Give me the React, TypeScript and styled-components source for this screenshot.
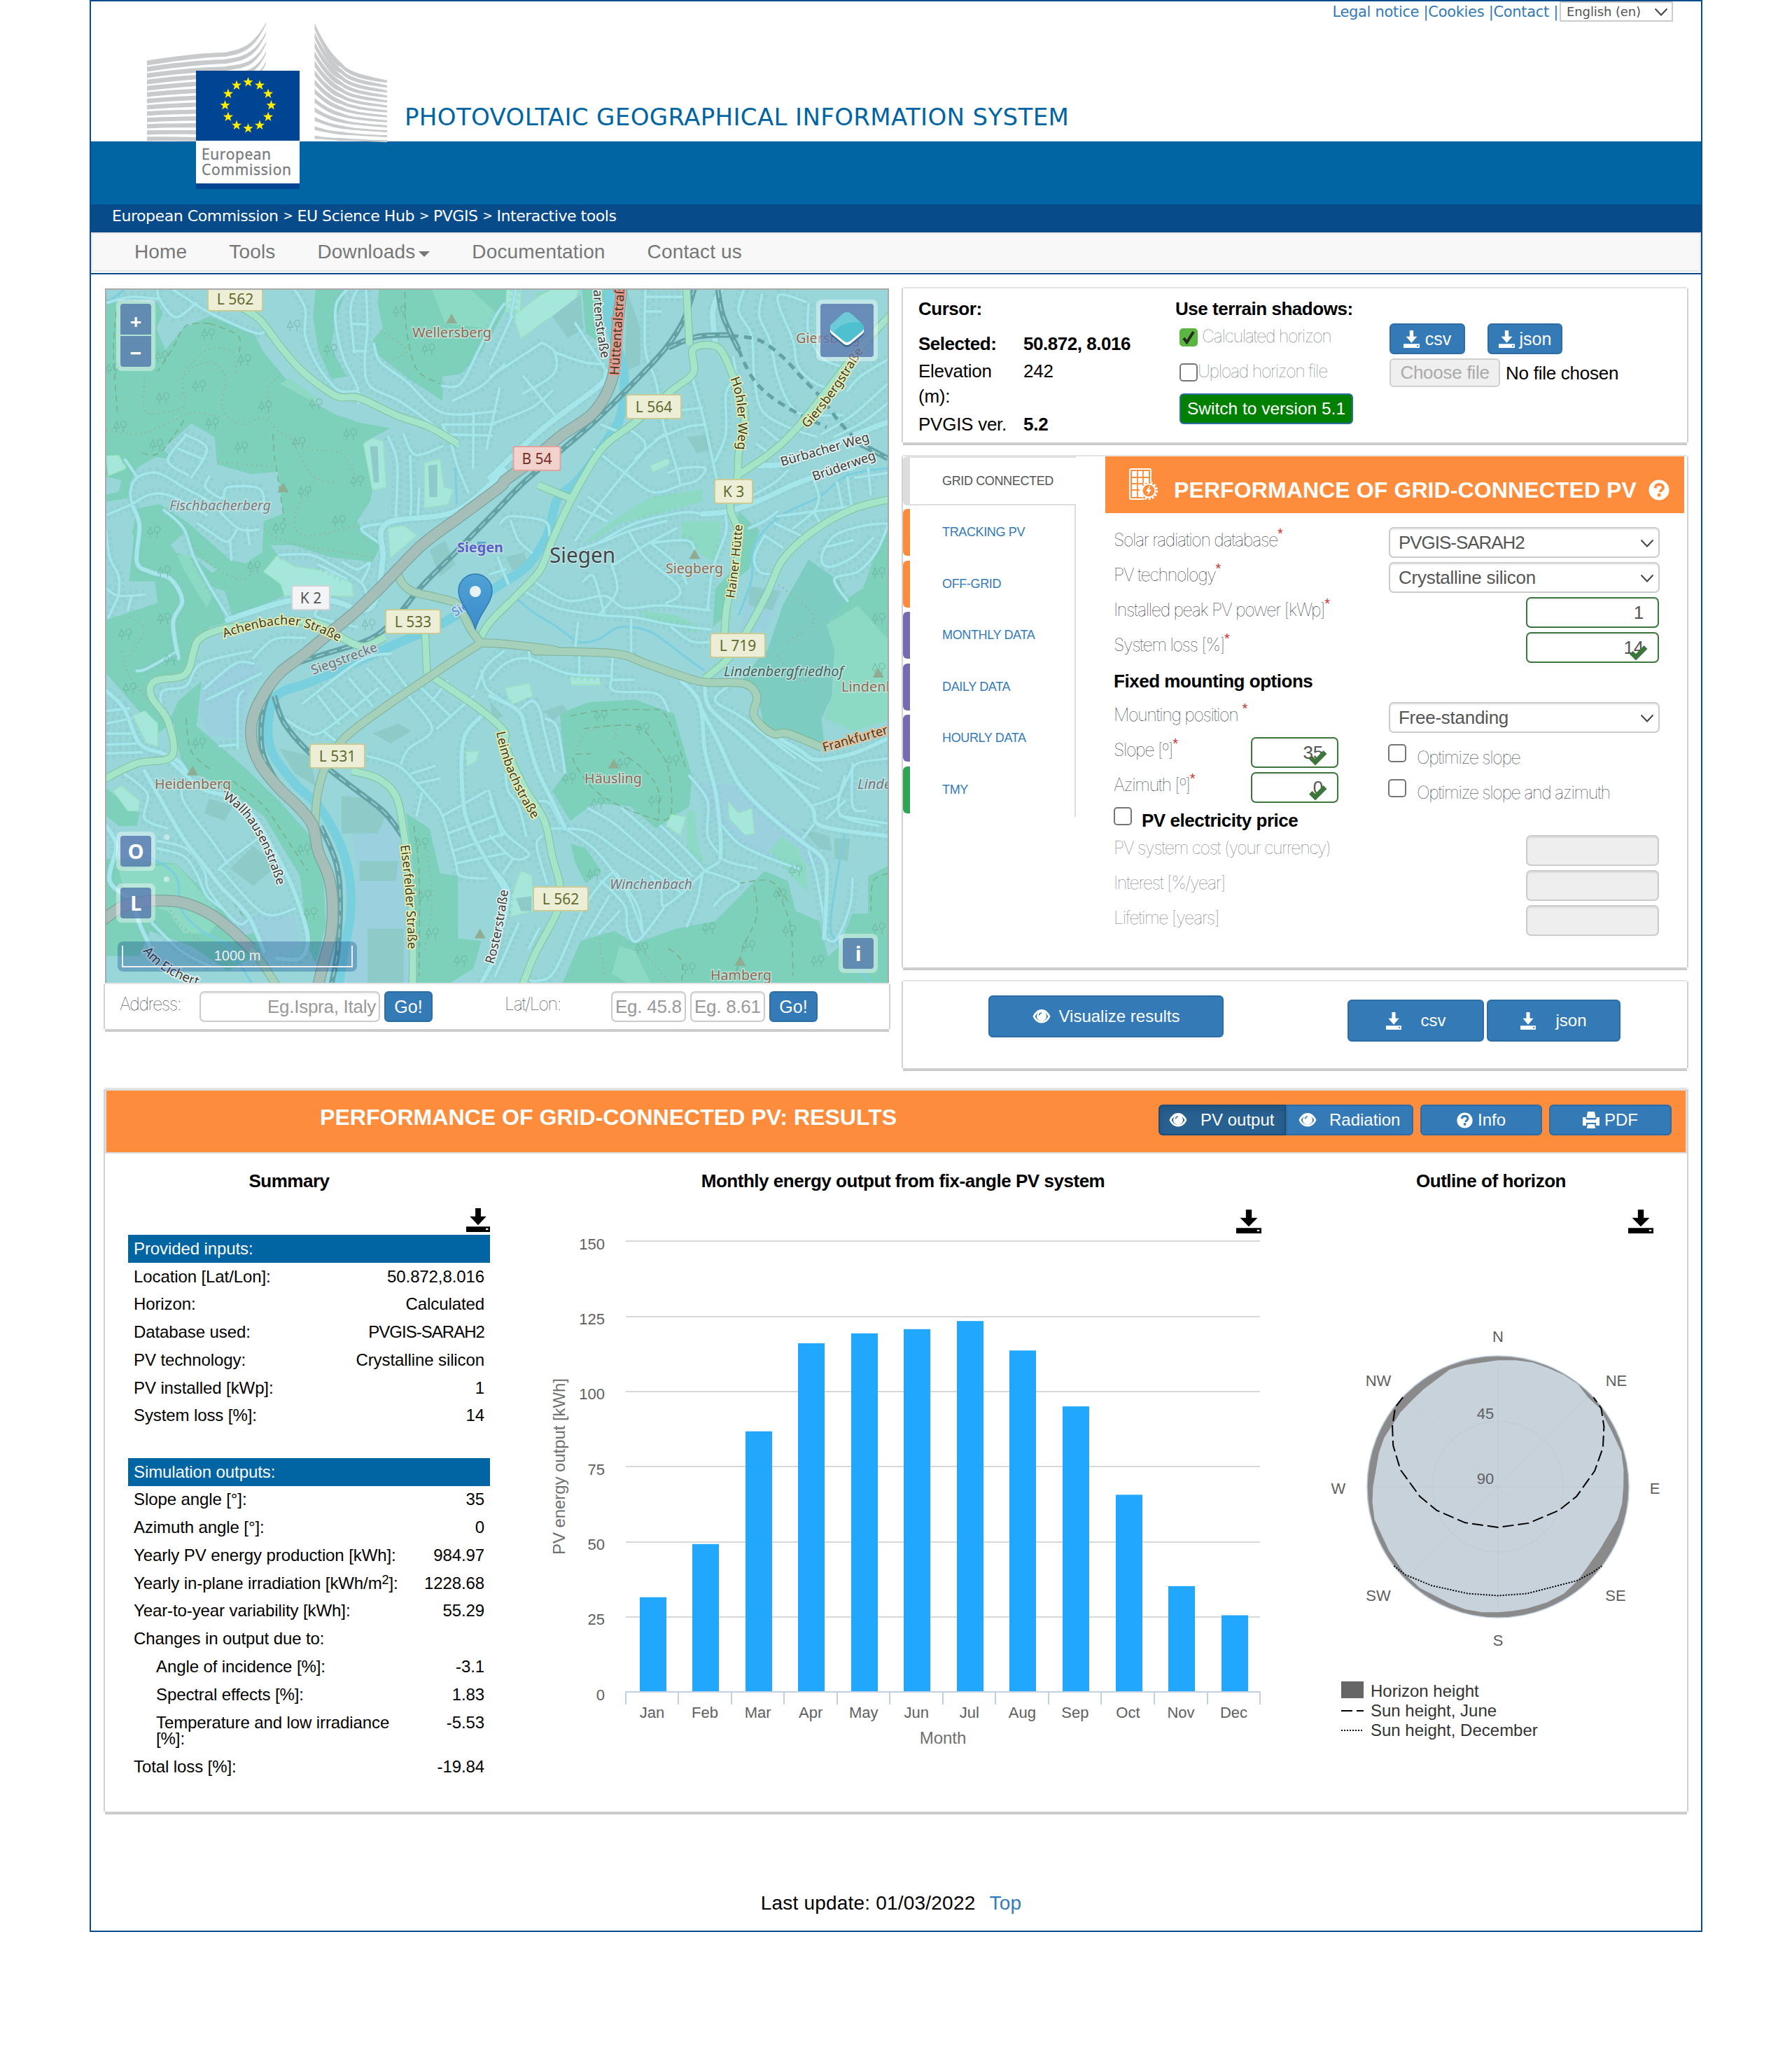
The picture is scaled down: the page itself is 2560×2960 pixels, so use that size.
import React from "react";
import styled, { createGlobalStyle, css } from "styled-components";

const SANS = `"Liberation Sans", Arial, sans-serif`;
const VERDANA = `"DejaVu Sans", Verdana, sans-serif`;
const MAPFONT = `"Noto Sans", "Open Sans", sans-serif`;

const GlobalStyle = createGlobalStyle`
  * { box-sizing: border-box; }
  body { margin: 0; background: #fff; font-family: ${SANS}; color: #000; }
`;

/* ---------- page frame ---------- */

const Page = styled.div`
  width: 2304px;
  height: 2760px;
  margin: 0 auto;
  border: 2px solid #074b8a;
  background: #fff;
  font-size: 26px;
  letter-spacing: -0.01em;
`;

const Header = styled.header`
  position: relative;
  height: 200px;
  display: flex;
  flex-direction: column;
  justify-content: space-between;
`;

const TopLinks = styled.div`
  display: flex;
  justify-content: flex-end;
  padding-right: 40px;
  font-family: ${VERDANA};
  font-size: 21px;
  line-height: 30px;
  letter-spacing: -0.32px;
  color: #337ab7;
  white-space: pre;
`;

const LangSelect = styled.div`
  display: flex;
  align-items: center;
  justify-content: space-between;
  width: 162px;
  height: 29px;
  margin-left: 2px;
  padding: 0 5px 0 8px;
  border: 2px solid #ccc;
  color: #555;
  font-size: 18px;
  letter-spacing: -0.1px;
`;

const SiteTitle = styled.h1`
  margin: 0;
  padding: 0 0 12px 448px;
  font: 400 34px/46px ${VERDANA};
  letter-spacing: 0.36px;
  color: #0065a2;
  white-space: nowrap;
`;

const Logo = styled.svg`
  position: absolute;
  left: 80px;
  top: 28px;
  z-index: 1;
`;

const BlueBand = styled.div`
  height: 90px;
  background: #0065a2;
`;

const Crumbs = styled.div`
  display: flex;
  gap: 7px;
  height: 40px;
  padding: 0 30px;
  background: #074b8a;
  color: #fff;
  font: 400 22px/33px ${VERDANA};
  letter-spacing: -0.45px;
  white-space: nowrap;
`;

const CrumbSep = styled.span`
  width: 13px;
  font-size: 17px;
`;

const Nav = styled.nav`
  display: flex;
  height: 56px;
  padding: 0 30px;
  border: 2px solid #e7e7e7;
  background: #f8f8f8;
  color: #777;
  font-size: 28px;
  line-height: 58px;
  letter-spacing: 0.15px;
`;

const NavItem = styled.span`
  display: flex;
  align-items: center;
  gap: 5px;
  padding: 0 30px;
`;

const Caret = styled.i`
  border: 8px solid transparent;
  border-top-color: #777;
  border-bottom: 0;
  margin-top: 5px;
`;

const NavLine = styled.div`
  height: 2px;
  margin-top: 2px;
  background: #074b8a;
`;

const Content = styled.main`
  padding: 20px 20px 0;
`;

const Columns = styled.div`
  display: flex;
  gap: 20px;
`;

const Column = styled.div<{ $gap?: number }>`
  display: flex;
  flex-direction: column;
  gap: ${(p) => p.$gap ?? 0}px;
  width: 1120px;
`;

const panelEdge = css`
  background: #fff;
  box-shadow: -2px 0 0 #d2d2d2, 2px 0 0 #d2d2d2, 0 -2px 0 #e4e4e4, 0 2px 0 #d0d0d0, 0 4px 0 #c8c8c8;
`;

/* ---------- controls ---------- */

const Thin = styled.span<{ $faded?: boolean }>`
  font-family: Inter, ${SANS};
  font-weight: 100;
  font-size: 25px;
  letter-spacing: -0.055em;
  color: ${(p) => (p.$faded ? "#6f747a" : "#1c2733")};
  white-space: nowrap;
`;

const Button = styled.button<{ $w: number; $h?: number; $size?: number; $gap?: number; $tone?: "green" }>`
  display: flex;
  align-items: center;
  justify-content: center;
  gap: ${(p) => p.$gap ?? 8}px;
  width: ${(p) => p.$w}px;
  height: ${(p) => p.$h ?? 44}px;
  padding: 0;
  border: 2px solid #2e6da4;
  border-radius: 6px;
  background: ${(p) => (p.$tone === "green" ? "#008000" : "#337ab7")};
  color: #fff;
  font: 400 ${(p) => p.$size ?? 26}px ${SANS};
  letter-spacing: 0;
  white-space: nowrap;
`;

const Field = styled.div<{ $w: number; $kind?: "valid" | "off"; $align?: "right"; $pad?: number }>`
  position: relative;
  display: flex;
  flex: none;
  align-items: center;
  justify-content: ${(p) => (p.$align ? "flex-end" : "space-between")};
  width: ${(p) => p.$w}px;
  height: 44px;
  padding: 1px ${(p) => p.$pad ?? 6}px 0;
  border: 2px solid ${(p) => (p.$kind === "valid" ? "#3c763d" : "#ccc")};
  border-radius: 7px;
  background: ${(p) => (p.$kind === "off" ? "#eee" : "#fff")};
  box-shadow: inset 0 2px 2px rgba(0, 0, 0, 0.075);
  color: ${(p) => (p.$kind === "valid" ? "#555" : "#999")};
  white-space: nowrap;
`;

const Placeholder = styled.span`
  overflow: hidden;
  width: 94px;
`;

const SelectBox = styled(Field)`
  padding: 1px 6px 0 12px;
  color: #555;
`;

const Caps = styled.span`
  letter-spacing: -0.04em;
`;

const Check = styled.span<{ $on?: boolean }>`
  display: flex;
  flex: none;
  align-items: center;
  justify-content: center;
  width: 26px;
  height: 26px;
  border-radius: 5px;
  border: 2px solid ${(p) => (p.$on ? "#5bb543" : "#767676")};
  background: ${(p) => (p.$on ? "#5bb543" : "#fff")};
`;

const ValidMark = styled.svg`
  position: absolute;
  right: 14px;
  bottom: 1px;
`;

const Chevron = () => (
  <svg width="20" height="12" viewBox="0 0 20 12" fill="none" stroke="#444" strokeWidth="2">
    <path d="M1.5 1.5 10 10.5 18.5 1.5" />
  </svg>
);

const Tick = () => (
  <ValidMark width="26" height="22" viewBox="0 0 26 22">
    <path fill="#3c763d" d="M20.5 0 25.5 5 9 21.5 0 12.5 4.6 8 9 12z" />
  </ValidMark>
);

const SaveIcon = ({ s = 25, fill = "#fff", w = 23 }: { s?: number; fill?: string; w?: number }) => (
  <svg width={w} height={s} viewBox="0 0 26 26" preserveAspectRatio="none" fill={fill}>
    <path d="M10 0h6v9h6l-9 9.500L4 9h6z" />
    <path fillRule="evenodd" d="M0 20h26v6H0zM21.500 22h2.500v1.800h-2.500z" />
  </svg>
);

const EyeIcon = () => (
  <svg width="26" height="22" viewBox="0 0 26 22">
    <path fill="#fff" fillRule="evenodd" d="M13 1C7 1 2.500 6 .5 11c2 5 6.500 9.500 12.500 9.500s10.500-4.500 12.500-9.500C23.500 6 19 1 13 1zM13 18c-4 0-7.500-3-9.300-7 1-2 2.600-4 4.300-5a7 7 0 1 0 10 0c1.700 1 3.300 3 4.300 5-1.800 4-5.300 7-9.300 7z" />
    <path d="M9.500 9.500c.2-2 1.500-3.300 3.500-3.500" stroke="#337ab7" strokeWidth="1.600" fill="none" />
  </svg>
);

const HelpIcon = ({ s, bg }: { s: number; bg: string }) => (
  <svg width={s} height={s} viewBox="0 0 30 30">
    <circle cx="15" cy="15" r="14.500" fill="#fff" />
    <path d="M9.700 12.200c0-3 2-5.200 5.500-5.200s5.700 1.900 5.700 4.500c0 3.600-4.100 3.500-4.100 6.600" fill="none" stroke={bg} strokeWidth="4" />
    <rect x="12.900" y="20" width="4.400" height="4.400" fill={bg} />
  </svg>
);

const PrintIcon = () => (
  <svg width="24" height="24" viewBox="0 0 24 24" fill="#fff">
    <path d="M7 0h10l1.500 9h-13z" />
    <path fillRule="evenodd" d="M0 8h4l1 3.500h14L20 8h4v12h-5v-4H5v4H0z" />
    <path d="M7 18h10l1 6H6z" />
  </svg>
);

const SolarIcon = () => (
  <svg width="42" height="47" viewBox="0 0 42 47" fill="none" stroke="#fff">
    <path d="M31 20V3q0-2-2-2H3Q1 1 1 3v39q0 2 2 2h19" strokeWidth="2" />
    <path d="M4 4h24v19l-9 10v8H4z" fill="#fff" stroke="none" />
    <path d="M12 3v39M20 3v30M3 13h26M3 22h26M3 31h18" stroke="#fd8d3c" strokeWidth="1.800" />
    <circle cx="28" cy="32" r="11.500" strokeWidth="3.500" strokeDasharray="2.500 2.660" />
    <circle cx="28" cy="32" r="9.500" fill="#fd8d3c" strokeWidth="2" />
    <path d="M29.500 25 24 33h3.300l-1.500 6 6-8.500h-3.300l2-5.500z" fill="#fff" stroke="none" />
  </svg>
);

/* ---------- map geometry ---------- */

/* The map data is digitised on four sheets; each vertex carries the sheet letter. */
const SHEETS: Record<string, [number, number, number, number]> = {
  A: [140, 400, 0.37, 0.3444],
  B: [700, 400, 0.37, 0.3444],
  C: [140, 930, 0.37, 0.3571],
  D: [700, 930, 0.37, 0.3571],
};

const parse = (s: string): [number, number][] =>
  s.split(" ").map((t) => {
    const [ox, oy, sx, sy] = SHEETS[t[0]];
    const [x, y] = t.slice(1).split(",").map(Number);
    return [ox + x * sx, oy + y * sy];
  });

const smooth = (s: string) => {
  const p = parse(s);
  let d = `M${p[0][0].toFixed(1)} ${p[0][1].toFixed(1)}`;
  for (let i = 0; i < p.length - 1; i++) {
    const a = p[i - 1] ?? p[i];
    const b = p[i];
    const c = p[i + 1];
    const e = p[i + 2] ?? c;
    const n = [b[0] + (c[0] - a[0]) / 6, b[1] + (c[1] - a[1]) / 6, c[0] - (e[0] - b[0]) / 6, c[1] - (e[1] - b[1]) / 6, c[0], c[1]];
    d += "C" + n.map((v) => v.toFixed(1)).join(" ");
  }
  return d;
};

const poly = (s: string) => parse(s).map((p) => p.map((v) => v.toFixed(1)).join(",")).join(" ");

const FOREST = [
  "A32,80 A130,85 A230,95 A250,140 A225,200 A260,290 A330,200 A430,150 A600,220 A640,300 A740,430 A850,510 A1000,590 A1130,615 A1030,670 A1060,870 A1050,920 A1000,1000 A1030,1050 A1100,1080 A1060,1170 A900,1150 A750,1100 A665,1100 A700,1150 A640,1210 A710,1260 A720,1310 A520,1400 A490,1290 A430,1270 A500,1420 A430,1440 A350,1568 A32,1568 A32,1410 A230,1340 A220,1250 A120,1250 A140,1060 A100,1040 A140,960 A32,990 A32,890 A80,880 A90,830 A32,815",
  "A840,41 A960,41 A920,150 A900,280 A960,400 A900,410 A850,290 A830,150",
  "A1085,41 A1568,41 A1540,150 A1480,300 A1400,390 A1330,400 A1330,500 A1200,410 A1080,310 A1060,250 A1100,200 A1080,100",
  "B0,41 B90,41 B60,120 B0,240",
  "B355,41 B450,41 B450,180 B420,260 B370,220",
  "B900,140 B960,290 B930,250 B895,170",
  "B960,960 B1040,1040 B1000,1200 B940,1250 B900,1400 B860,1440 B870,1280 B940,1200",
  "B1536,1030 B1500,1100 B1440,1280 B1380,1320 B1300,1440 B1340,1568 B1536,1568",
  "D270,250 D380,205 D560,195 D710,250 D780,500 D770,620 D640,710 D540,620 D400,610 D310,680 D240,560 D290,490",
  "D280,1327 D350,1160 D480,1120 D560,1170 D720,1110 D870,1080 D1060,880 D1150,920 D1180,1040 D1270,1080 D1290,1160 D1330,1327",
  "D1460,900 D1536,860 D1536,1327 D1200,1327 D1350,1180 D1400,1050 D1460,1050",
  "D310,770 D370,790 D430,880 D370,930 D330,850",
  "C32,0 C360,0 C340,90 C200,110 C190,160 C270,300 C230,330 C150,230 C32,90",
  "C280,270 C310,200 C400,120 C380,300 C560,460 C700,600 C820,740 C870,900 C880,1100 C840,1250 C810,1180 C780,900 C640,660 C480,540 C330,470",
  "C32,550 C160,650 C150,700 C80,700 C32,660",
  "C32,830 C300,850 C440,990 C560,1140 C620,1120 C640,1200 C500,1280 C360,1180 C200,1120 C160,1220 C32,1220",
  "C1190,650 C1280,710 C1320,890 C1390,900 C1390,1150 C1480,1160 C1450,1270 C1360,1327 C1230,1327 C1220,900",
];

const TOWN_PATCH = [
  "A250,700 A360,595 A450,650 A460,765 A590,805 A695,795 A715,970 A640,1000 A635,1130 A570,1175 A510,1160 A350,1010 A240,930 A135,950 A120,850 A150,780 A220,735 A290,740",
  "A280,1100 A340,1040 A370,1140 A460,1200 A440,1215 A380,1160 A300,1130",
  "A32,920 A140,900 A150,960 A130,1060 A100,1080 A90,1200 A32,1200",
  "A820,500 A860,460 A1030,550 A1020,590 A920,560",
];

const MEADOW = [
  "A1290,41 A1440,41 A1540,140 A1500,200 A1340,180",
  "B360,1090 B500,980 B620,900 B820,870 B820,920 B650,970 B500,1010 B400,1080",
  "B1300,1430 B1420,1350 B1536,1490 B1536,1568 B1340,1568",
  "D1330,0 D1536,0 D1536,280 D1400,320 D1290,270 D1330,150",
  "D500,1180 D560,1200 D620,1327 D530,1327 D470,1290",
  "D760,640 D790,640 D800,760 D830,860 D760,790",
  "C80,880 C300,850 C480,1060 C430,1130 C330,1130 C270,1040 C110,990",
  "B740,1000 B890,1000 B880,1180 B830,1150 B740,1080",
  "A305,1140 A350,1140 A440,1310 A420,1360 A330,1200",
  "A740,410 A860,500 A840,510 A700,430",
  "D1080,800 D1130,740 D1190,790 D1220,860 D1225,960 D1200,940",
  "B580,1370 B720,1390 B830,1450 B780,1460 B600,1400",
  "B180,50 B260,41 B270,80 B190,120",
];

const SCHOOL = [
  "A1025,680 A1060,658 A1100,670 A1112,860 A1060,870",
  "A1262,760 A1320,745 A1335,860 A1370,870 A1350,930 A1260,945",
  "A640,1210 A690,1145 A760,1190 A900,1210 A980,1260 A985,1310 A720,1310 A705,1260",
  "A32,730 A80,728 A110,780 A40,812",
  "B90,150 B200,60 B240,41 B340,41 B330,90 B210,170 B120,240",
  "B65,41 B120,41 B115,130 B60,130",
  "D60,150 D150,130 D165,180 D80,215",
  "D310,105 D425,108 D425,135 D315,135",
  "D700,655 D755,665 D735,735 D680,700",
  "D920,605 D960,650 D1010,630 D1020,730 D985,735 D925,670",
  "D80,990 D120,880 D160,900 D170,1040 D80,1060",
  "C135,260 C180,240 C230,290 C230,380 C190,370",
  "C60,560 C90,540 C160,600 C155,640 C115,640",
  "A1120,1030 A1180,1020 A1230,1060 A1130,1150",
  "B620,770 B690,740 B690,765 B630,795",
  "C1420,405 C1470,400 C1460,440 C1425,460",
];

const YARD = [
  "C400,130 C560,40 C640,60 C580,180 C560,350 C430,340 C390,240",
  "C960,560 C1160,700 C1190,760 C1200,1327 C960,1327 C1000,900",
  "D780,520 D960,540 D1240,760 D1280,860 D1120,840 D900,740",
  "B1000,1270 B1140,1270 B1060,1460 B960,1460",
  "C420,1070 C640,1060 C760,1060 C790,1180 C660,1230",
];

const BUILDING = [
  "C940,580 C1040,590 C1120,640 C1080,730 C940,730",
  "C700,390 C820,420 C840,540 C760,490",
  "C510,870 C600,780 C690,860 C600,940",
  "C1010,840 C1160,840 C1150,920 C1010,920",
  "C1040,1110 C1180,1110 C1180,1327 C1040,1327",
  "C1060,330 C1160,290 C1210,320 C1130,370",
  "C430,590 C520,620 C490,680 C410,650",
  "B240,150 B350,60 B360,200 B300,240",
  "B530,50 B580,200 B580,350 B520,380",
  "B760,650 B850,640 B860,700 B800,720",
  "B1000,1270 B1120,1290 B1090,1370 B1000,1350",
  "D1200,710 D1310,740 D1320,800 D1270,790",
  "D1330,750 D1390,750 D1380,840 D1330,830",
  "D210,240 D280,215 D300,240 D240,275",
  "A1050,690 A1080,690 A1085,840 A1065,840",
  "A1275,770 A1310,765 A1310,900 A1280,900",
  "A1280,1120 A1340,1080 A1380,1180 A1320,1230",
  "B60,1150 B130,1130 B150,1180 B90,1210",
  "D0,200 D50,260 D10,280",
  "D100,990 D160,980 D160,1040 D120,1040",
];

const MINOR: [number, string[]][] = [
  [4, [
    "A230,41 A238,80 A300,155 A380,95", "A290,41 A340,75 A430,135 A610,220 A650,200", "A32,95 A130,70 A240,80",
    "A760,41 A800,120 A800,230 A840,340 A900,430 A940,462 A1000,460", "A960,41 A920,100 A920,200 A950,330 A1000,440 A1005,510",
    "A1000,41 A975,120 A990,300", "A1035,41 A1040,200 A1030,340 A1050,440 A1160,500 A1280,590 A1390,690", "A985,182 A1040,185", "A985,295 A1035,295",
    "A1065,265 A1090,340 A1190,420 A1330,550 A1536,545", "A1568,100 A1536,150 A1470,290 A1400,430 A1330,440", "A1568,350 A1480,440 A1370,500",
    "A1330,600 A1530,598", "A1330,640 A1520,645", "A1450,550 A1448,780", "A1550,450 A1500,700", "A1330,600 A1360,670 A1390,780 A1430,880",
    "A1180,640 A1225,725 A1330,690", "A1120,650 A1155,760 A1150,980", "A1205,730 A1210,900 A1205,990", "A1240,865 A1235,980",
    "A105,745 A150,815", "A135,940 A125,880 A150,820 A230,800 A330,860 A430,920 A540,1030 A620,1035", "A32,975 A130,930 A200,890 A280,895 A420,975",
    "A255,955 A330,1030 A370,1150 A430,1270 A510,1410", "A430,815 A415,860 A480,905 A500,860 A610,860 A640,900 A630,960",
    "A385,1010 A440,1050 A500,1085 A540,1030", "A510,1080 A515,1160", "A575,1030 A585,1095", "A335,640 A420,700 A360,820", "A335,650 A270,750 A350,810", "A310,700 A400,740",
    "A700,1140 A820,1140 A900,1180 A1020,1260 A1040,1340", "A850,1180 A960,1240", "A945,1170 A1000,1200 A1050,1175 A1020,1250", "A1100,1100 A1020,1040 A1040,1020 A1115,1010",
    "A32,1280 A80,1310 A180,1305", "A80,1310 A40,1400", "A130,1310 A115,1370", "A32,1040 A45,1150 A80,1230 A80,1310", "A845,1370 A850,1400 A1000,1440", "A600,1568 A680,1490 A800,1485",
    "B130,400 B250,560", "B0,600 B160,530 B240,460", "B200,260 B130,310 B0,400", "B200,260 B250,300 B245,390 B130,470", "B250,300 B360,340 B440,350", "B330,180 B420,330 B450,380", "B85,150 B0,350", "B100,41 B80,150",
    "B600,41 B600,290 B640,420 B670,600 B720,780 B735,850", "B600,130 B660,130", "B600,70 B750,70", "B780,400 B830,600 B870,800 B880,850",
    "B540,620 B600,690 B520,800 B410,950 B330,1080", "B670,640 B560,740", "B400,700 B520,800 B630,880 B740,850 B800,830 B830,780 B740,780 B690,800", "B430,600 B520,640", "B740,540 B820,530", "B640,660 B760,610 B830,600",
    "B980,41 B960,130 B1010,230 B1020,400 B1050,540 B1150,610 B1260,650", "B1050,60 B1040,150 B1080,250 B1110,400 B1160,520 B1220,560 B1360,560",
    "B1220,90 B1120,60 B1120,120 B1170,250 B1190,360 B1260,430 B1350,460", "B1230,100 B1230,220 B1290,330 B1400,370", "B1536,330 B1430,400 B1380,460", "B1536,430 B1400,560 B1280,640", "B1536,510 B1440,590 B1330,650",
    "B940,320 B960,450 B990,600", "B1030,680 B1080,720", "B1050,610 B1130,680", "B870,750 B910,640 B910,480 B930,430", "B420,1090 B560,1010 B740,965 B820,970", "B1020,890 B1100,840 B1150,790",
    "B340,1120 B450,1080 B540,1040 B680,1000", "B540,1050 B600,1150 B720,1260 B730,1310 B680,1340", "B620,1090 B720,1180 B760,1260", "B480,1180 B600,1100 B720,1030", "B620,1090 B760,1080 B790,1120", "B840,1370 B860,1200 B910,1050 B910,980",
    "B130,1290 B260,1360 B430,1390 B560,1400 B700,1430 B850,1450", "B170,1250 B300,1330 B440,1310 B520,1360 B660,1350 B850,1370", "B360,1250 B400,1230 B440,1380", "B470,1180 B490,1290 B420,1390", "B545,1410 B545,1568", "B340,1420 B330,1520",
    "B40,1010 B80,980 B210,1000 B230,1060", "B80,1000 B110,1080 B160,1130", "B340,940 B450,1000", "B380,900 B470,970", "B700,1440 B780,1500 B860,1500",
    "B1110,980 B1250,960 B1390,940", "B1250,830 B1270,900 B1250,960 B1170,1030", "B1340,840 B1360,940", "B1380,820 B1395,930", "B1000,1030 B1060,1000 B1110,960", "B1460,780 B1470,890", "B1410,820 B1536,800",
    "B1250,960 B1280,1020", "B1100,1010 B1200,1060", "B1060,1060 B1130,1110", "B1060,1060 B1020,1150 B1040,1210 B1080,1220",
    "B1536,1010 B1440,1020 B1330,1060 B1280,1150 B1310,1190 B1400,1150 B1480,1070", "B1536,1020 B1490,1130 B1420,1210 B1330,1240 B1380,1330", "B1290,1110 B1400,1080", "B0,1220 B60,1200", "B30,1150 B70,1260",
    "C32,240 C120,230", "C32,290 C130,270", "C32,330 C140,330", "C32,375 C150,370", "C32,410 C170,405", "C150,80 C190,70 C310,0", "C290,300 C250,240 C250,160 C340,140 C400,50 C590,0",
    "C600,50 C530,50 C410,150", "C630,90 C420,195", "C560,160 C540,200 C540,390", "C470,380 C530,375", "C330,510 C330,600 C440,760 C500,850", "C630,740 C480,860 C490,890 C640,1050 C760,1030",
    "C100,490 C190,570 C180,670 C270,710", "C230,760 C340,790 C410,880 C430,960 C540,1090 C590,1060", "C230,790 C330,820 C380,890 C420,980 C480,1030", "C210,1090 C320,1200 C430,1260",
    "C850,180 C930,290", "C900,150 C1000,260", "C970,110 C1060,220", "C1040,70 C1130,170", "C1110,30 C1190,140", "C790,210 C1010,40 C1130,10", "C720,270 C800,320 C870,320 C1080,150", "C870,320 C930,370",
    "C1190,170 C1290,310 C1200,390 C1170,450", "C1230,130 C1360,260", "C1310,310 C1450,180", "C1350,120 C1290,200", "C1040,420 C1160,460 C1230,530 C1290,600", "C1210,490 C1300,460", "C1230,530 C1320,510", "C1250,570 C1230,660",
    "C1290,600 C1330,660 C1380,840 C1400,900 C1500,910", "C1330,660 C1500,560", "C1350,730 C1530,660", "C1370,800 C1568,730", "C1380,850 C1568,810", "C1510,560 C1560,740", "C1460,150 C1500,60 C1568,0", "C1480,80 C1500,150 C1568,200",
    "D0,110 D60,50 D150,30 D300,90 D470,100", "D150,0 D155,40", "D475,10 D470,100 D480,160 D640,170 D690,240", "D345,20 D345,90", "D470,115 D555,115", "D110,240 D160,200 D190,230 D210,320 D250,480", "D215,270 D260,310 D290,490",
    "D190,600 D230,610 D270,690", "D225,710 D380,720 D500,800 D650,900 D740,970", "D380,630 D480,690 D590,790 D720,900 D770,910", "D510,630 D650,760 D780,900", "D660,700 D760,800 D830,880", "D290,710 D400,790 D480,890 D540,990 D590,1130",
    "D890,690 D960,770 D1080,830 D1190,870", "D890,830 D940,850 D1030,870", "D770,500 D840,600 D840,740 D890,830 D830,880 D740,970 D670,1020 D660,960 D620,900", "D830,880 D960,930 D900,980 D865,1020", "D820,890 D800,1000 D760,1100",
    "D430,920 D520,1020 D530,1110 D570,1160 D670,1030", "D490,890 D570,1020 D590,1130", "D480,880 D420,940 D350,1050 D250,1280 D180,1320 D140,1310", "D460,980 D370,1140", "D500,1040 D420,1130",
    "D920,140 D870,200 D980,270 D1280,480", "D980,270 D1180,430", "D1060,430 D1200,520 D1270,550", "D1240,620 D1340,580 D1380,510 D1420,450 D1536,430", "D1260,680 D1200,760", "D1370,500 D1350,650 D1500,700", "D1400,450 D1400,620 D1450,640", "D1300,670 D1370,600", "D1350,660 D1536,690",
    "D1230,800 D1260,900 D1290,1080 D1300,1150 D1340,1150 D1390,1020 D1400,910", "D60,490 D70,560 D110,620 D140,740", "D0,600 D60,730 D150,810 D90,830 D0,740", "D90,830 D50,890", "D200,740 D180,780 D220,930", "D110,1090 D20,1300", "D190,1110 D150,1190",
  ]],
  [6, [
    "A135,940 A160,1020 A150,1170 A200,1210 A280,1240 A325,1330 A290,1420 A310,1568", "C32,160 C100,230 C160,370 C250,410 C310,440 C340,480", "C180,480 C240,590 C330,750 C420,870 C480,950 C580,1060 C640,1200",
    "C280,440 C400,550 C490,580 C600,660 C680,800 C740,920 C790,1060 C810,1160 C780,1230 C690,1230", "C32,700 C70,780 C45,920 C130,1000 C160,1090 C200,1180", "C1480,260 C1410,360 C1410,600 C1440,720 C1490,820 C1568,950",
    "D0,180 D110,240 D140,330 D180,470 D240,600 D290,710", "D740,120 D810,210 D830,400 D870,560 D890,740 D890,830", "D830,140 D850,230 D980,350 D1100,470 D1240,620 D1280,700 D1536,740",
    "D810,220 D880,360 D960,530 D1080,660 D1200,760 D1290,840 D1300,960 D1290,1150", "D1100,340 D1200,400 D1260,435 D1400,410 D1536,350", "C1480,1327 C1540,1200 C1568,1000", "D0,860 D70,960 D50,1100",
  ]],
  [8, [
    "A500,1410 A740,1330 A900,1330 A1030,1370 A1080,1300 A1100,1150 A1115,1010 A1380,960 A1568,790", "B0,820 B200,620 B420,440 B450,380", "B890,41 B860,130 B870,260",
    "B1040,770 B1150,760 B1300,690 B1460,620 B1536,590", "B820,970 B920,960 B1050,910 B1170,850 B1300,800 B1400,780",
  ]],
];

const RIVER = "B465,20 B460,180 B515,370 B505,560 B440,680 B340,830 B260,910 B220,1060 B140,1190 B30,1270 A1400,1380 A1280,1450 A1150,1510 C830,120 C700,170 C660,260 C670,400 C760,530 C850,620 C930,760 C970,900 C975,1050 C950,1200 C930,1340";
const STREAMS = [
  "B100,1320 B170,1380 B260,1440 B340,1500 B420,1490 B500,1440 B620,1460 B760,1568 D830,80",
  "B1536,780 B1380,810 B1270,900 B1120,980 B1020,1100 B1010,1240 B960,1390",
  "D1370,730 D1340,900 D1315,1100 D1350,1180 D1480,1340",
  "C90,850 C180,820 C300,900 C320,1030 C400,1120 C500,1180 C600,1340",
  "A1380,780 A1385,930", "A32,100 A100,41",
];

const RAILS = [
  "B790,30 B750,160 B680,280 B560,420 B400,590 B260,720 B130,840 B30,950 A1480,1020 A1380,1130 A1250,1270 A1150,1400 A1050,1490 A850,1560 C730,70 C655,180 C630,300 C640,420 C700,540",
  "C680,180 C720,290 C820,410 C950,520 C1100,640 C1175,740",
  "C860,700 C920,850 C935,1000 C925,1200 C900,1340",
  "B690,280 B800,235 B930,228",
  "B880,41 B900,150 B960,290",
  "B1430,680 B1536,740",
];
const TUNNELS = ["B960,290 B1010,400 B1080,480 B1200,560 B1300,610", "B930,230 B1040,250 B1130,320 B1200,400 B1280,490 B1350,590 B1430,680"];

const GREEN = [
  "A520,95 A620,160 A700,270 A780,370 A860,440 A930,485 A1010,490 A1150,560 A1280,610 A1390,680",
  "A1470,1500 B0,1420 B120,1290 B195,1200 B240,1080 B300,940 B360,820 B440,690 B560,590 B700,460 B785,385 B785,285 B880,280 B935,390 B980,520 B980,620 B960,720 B955,820 B930,900 B930,960 B960,1050 B950,1200 B915,1350 B905,1470",
  "B185,850 B320,910", "B758,30 B770,270",
  "B955,810 B1080,720 B1180,620 B1300,460 B1430,280 B1560,130",
  "B1550,908 B1400,950 B1250,1040 B1130,1160 B1070,1300 B990,1460 D920,30 D830,110",
  "C1262,-100 C1270,90", "C1300,110 C1470,230 C1568,320 D60,380 D130,540 D210,680 D240,820 D270,940 D260,1040 D170,1220 D125,1340",
  "C980,480 C1080,510 C1150,580 C1180,720 C1200,900 C1215,1100 C1215,1340",
  "A920,1470 A1020,1520 A1110,1480", "A930,1470 A850,1425 A720,1415 A600,1430 A470,1450 A390,1490 C370,0 C335,95 C220,120 C205,180 C270,280 C285,420 C150,450 C20,515",
];

const OLIVE = [
  "A1240,1110 A1165,1190 A1165,1240 A1210,1290 A1300,1315 A1380,1340 A1410,1390 A1440,1450 A1480,1510",
  "A1470,1505 A1568,1510 B250,1535 D180,0 D480,10 D600,50 D740,100 D830,125 D980,130 D1030,180 D1020,260 D1090,330 D1150,330 D1280,385",
  "A1480,1505 C1400,20 C1270,110 C1100,230 C950,350 C880,460 C850,560 C840,650 C835,760",
  "C540,1150 C620,1230 C690,1340",
];

const TRUNK = [
  "B510,20 B492,200 B480,370 B450,470 B390,560 B270,650 B150,760 B60,830 A1550,860 A1400,980 A1250,1100 A1100,1265 A1000,1370 A900,1460 C800,10 C700,90 C630,190 C595,280 C595,370 C630,460 C700,550 C780,630 C830,700 C850,800 C890,900 C905,1000 C900,1130 C870,1250 C850,1340",
  "C20,1075 C100,1020 C200,1000 C320,1005 C430,1050 C520,1120 C590,1190",
];

const PATHS = [
  "A180,400 A180,540 A240,550 A330,520 A330,400 A430,340 A490,400 A480,530 A550,600 A640,570 A700,630 A820,700 A940,720 A1000,830",
  "A330,380 A420,290 A520,300 A530,400", "A460,755 A690,775", "A660,570 A660,450 A700,400", "A740,640 A800,770 A840,820 A910,840", "A840,820 A760,980 A800,1060 A1000,1020", "A640,1030 A740,1090 A1060,1150",
  "A32,620 A150,640 A280,590 A360,550 A480,570", "A380,1120 A460,1200 A560,1240 A620,1180", "A1090,210 A1190,290 A1140,330",
  "A120,1400 A180,1450 A120,1560", "D560,1170 D640,1260 D690,1327", "D420,1130 D440,1300", "C90,0 C120,100 C200,200", "C1270,800 C1290,1000 C1260,1200", "C270,1020 C320,1100 C400,1160",
  "B1100,1250 B1250,1400 B1150,1500", "D1100,0 D1200,120 D1270,60", "D330,400 D380,320 D480,300 D480,360",
];
const TRACKS = [
  "A70,130 A60,300 A75,560", "A430,180 A340,190 A290,280 A230,380", "A430,180 A540,230 A545,300", "A170,718 A240,715 A340,570", "A675,640 A680,720 A690,790 A720,1000", "A1185,50 A1190,200 A1230,370 A1320,430",
  "D310,260 D420,240 D600,235 D680,260 D760,480", "D360,310 D560,300 D640,380 D690,480 D695,660 D600,660 D420,570 D320,430 D390,410", "D500,400 D600,480 D650,560 D650,680", "D1020,940 D1030,1060 D980,1180 D950,1290", "D1110,960 D1160,1100 D1170,1300",
  "D690,1190 D740,1240 D740,1327", "C340,270 C360,400 C440,480", "C520,520 C640,620 C720,740 C810,880", "C1220,700 C1240,900 C1240,1300", "D960,930 D1080,920 D1150,1000", "D1536,890 D1480,920 D1470,1040", "C560,1060 C520,1000",
];

const TREES = "A425,225 A245,318 A565,332 A390,440 A250,490 A645,525 A55,370 A85,608 A440,595 A225,685 A775,675 A553,695 A973,640 A1000,835 A797,880 A215,1045 A700,1030 A930,1000 A255,1210 A602,1190 A255,1405 A105,1470 A1165,130 A1275,288 A755,190 A897,290 A840,515 A1045,1430 D427,260 D590,310 D705,440 D515,450 D305,510 D637,600 D415,610 D400,895 D1118,975 D1155,1120 D845,1110 D998,1180 D585,1190 D767,1270 D1265,1240 D1500,1110 D1180,880 C122,150 C390,370 C280,35 C795,795 C820,1050 C1250,770 C1260,980 C1290,1130 C1400,1240 B1500,1215 B1500,1405 D1500,70";
const PEAKS = "A1365,160 A715,860 B790,1137 D478,450 D966,1240 D1499,87 C365,478 C1475,1130";

type Lbl = { t: string; x: number; y: number; c?: string; s?: number; i?: boolean; w?: number; len?: number };
const LABELS: Lbl[] = [
  { t: "Wellersberg", x: 589, y: 482, c: "#8f6a50", len: 113 },
  { t: "Fischbacherberg", x: 242, y: 729, c: "#7b7b80", i: true, len: 145 },
  { t: "Siegen", x: 653, y: 789, c: "#5d5fc8", w: 700, len: 66 },
  { t: "Siegen", x: 785, y: 804, c: "#3e474c", s: 30, len: 94 },
  { t: "Siegberg", x: 951, y: 819, c: "#8f6a50", len: 82 },
  { t: "Häusling", x: 835, y: 1119, c: "#8f6a50", len: 82 },
  { t: "Winchenbach", x: 871, y: 1270, c: "#6f7680", i: true, len: 118 },
  { t: "Heidenberg", x: 221, y: 1127, c: "#8f6a50", len: 109 },
  { t: "Hamberg", x: 1015, y: 1400, c: "#8f6a50", len: 87 },
  { t: "Lindenbergfriedhof", x: 1034, y: 966, c: "#3f665e", i: true, len: 171 },
  { t: "Lindenberg", x: 1202, y: 988, c: "#8f6a50", len: 107 },
  { t: "Lindenberg", x: 1225, y: 1127, c: "#6f7680", i: true },
  { t: "Giersberg", x: 1137, y: 490, c: "#8f6a50", len: 92 },
];

const YEL = "#e9edb0";
const STREETS: { t: string; d: string; halo?: string; c?: string; s?: number }[] = [
  { t: "Achenbacher Straße", d: "M320 911Q370 894 405 892 440 892 486 918", halo: YEL, s: 18 },
  { t: "Siegstrecke", d: "M447 964Q500 945 550 926", c: "#66737a", halo: "#c3dede", s: 18.5 },
  { t: "Sieg", d: "M650 881L704 849", c: "#5b80cf", halo: "#b8e0ea" },
  { t: "Gartenstraße", d: "M848 401Q847 460 861 520", s: 18 },
  { t: "Hüttentalstraße", d: "M884 536Q888 470 895 370", halo: "#ee9685", s: 18.5 },
  { t: "Hohler Weg", d: "M1043 541Q1060 580 1052 655", halo: YEL, s: 18.5 },
  { t: "Giersbergstraße", d: "M1153 612Q1190 575 1237 495", halo: YEL, s: 18 },
  { t: "Bürbacher Weg", d: "M1117 666L1256 626", s: 18 },
  { t: "Brüderweg", d: "M1163 687L1262 652", s: 18 },
  { t: "Hainer Hütte", d: "M1049 855Q1058 800 1062 730", halo: YEL },
  { t: "Leimbachstraße", d: "M709 1046Q720 1110 766 1178", halo: YEL, s: 18 },
  { t: "Eiserfelder Straße", d: "M572 1208Q582 1280 583 1370", halo: YEL, s: 17.8 },
  { t: "Rosterstraße", d: "M705 1378Q722 1320 728 1250", s: 18 },
  { t: "Wallhausenstraße", d: "M318 1141Q365 1165 395 1262", s: 17.8 },
  { t: "Am Eichert", d: "M204 1359Q230 1395 294 1412", s: 18.5 },
  { t: "Frankfurter", d: "M1177 1074L1280 1045", halo: "#f0c193", s: 18 },
];

const SHIELDS: { t: string; x: number; y: number; w: number; k: "L" | "B" | "K" }[] = [
  { t: "L 562", x: 336, y: 427, w: 78, k: "L" },
  { t: "L 564", x: 934, y: 581, w: 78, k: "L" },
  { t: "B 54", x: 767, y: 655, w: 67, k: "B" },
  { t: "K 3", x: 1048, y: 702, w: 54, k: "L" },
  { t: "K 2", x: 444, y: 854, w: 54, k: "K" },
  { t: "L 533", x: 590, y: 888, w: 78, k: "L" },
  { t: "L 719", x: 1054, y: 922, w: 78, k: "L" },
  { t: "L 531", x: 482, y: 1080, w: 78, k: "L" },
  { t: "L 562", x: 801, y: 1284, w: 78, k: "L" },
];
const SHIELD_TONE = { L: ["#edeed6", "#c8ca98", "#636b30"], B: ["#f2d2cc", "#dda59d", "#742f28"], K: ["#f3f4f6", "#cfd3d6", "#555"] };

const Stroke = ({ lines, c, w, dash, o, cap }: { lines: string[]; c: string; w: number; dash?: string; o?: number; cap?: "round" }) => (
  <g fill="none" stroke={c} strokeWidth={w} strokeDasharray={dash} opacity={o} strokeLinecap={cap} strokeLinejoin="round">
    {lines.map((l) => <path key={l} d={smooth(l)} />)}
  </g>
);

const Areas = ({ list, c, edge }: { list: string[]; c: string; edge?: string }) => (
  <g fill={c} stroke={edge} strokeWidth={edge ? 1.2 : 0} strokeLinejoin="round">
    {list.map((l) => <polygon key={l} points={poly(l)} />)}
  </g>
);

const MapDrawing = () => (
  <svg width="1116" height="990" viewBox="152 414 1116 990" fontFamily={MAPFONT} letterSpacing="0">
    <rect x="152" y="414" width="1116" height="990" fill="#98d6d9" />
    <Areas list={YARD} c="#9bd1de" />
    <Areas list={FOREST} c="#7dd0b9" />
    <Areas list={TOWN_PATCH} c="#98d6d9" />
    <Areas list={["B1230,1160 B1350,1250 B1380,1330 B1310,1420 B1340,1568 B1070,1540 B1130,1350", "D1060,0 D1330,0 D1320,180 D1280,270 D1290,370 D1150,330 D1060,320 D1030,150 D970,120"]} c="#7cccc1" />
    <Areas list={MEADOW} c="#8cdac3" />
    <Areas list={SCHOOL} c="#a6e7db" edge="#9ce6bd" />
    <Areas list={BUILDING} c="#8dcac8" />
    <Stroke lines={PATHS} c="#9ab19b" w={1.8} dash="2 5" />
    <Stroke lines={TRACKS} c="#79b08d" w={1.6} dash="9 6" />
    {MINOR.map(([w, l]) => <Stroke key={w} lines={l} c="#86c6c8" w={15} dash="4 5" o={0.32} />)}
    <Stroke lines={[RIVER]} c="#78cfdd" w={13} />
    <Stroke lines={STREAMS} c="#79cfe0" w={3} />
    {MINOR.map(([w, l]) => (
      <g key={w}>
        <Stroke lines={l} c="#8ccfd4" w={w + 1} cap="round" />
        <Stroke lines={l} c="#a5e6eb" w={w - 0.3} cap="round" />
      </g>
    ))}
    <Stroke lines={RAILS} c="#63a2a6" w={8} />
    <Stroke lines={RAILS} c="#9fd2d5" w={1.6} dash="12 7" />
    <Stroke lines={TUNNELS} c="#63a2a6" w={5} dash="11 8" />
    <Stroke lines={GREEN} c="#86c3a2" w={11.5} />
    <Stroke lines={GREEN} c="#a4e5ca" w={9.2} />
    <Stroke lines={OLIVE} c="#83b49c" w={12.5} />
    <Stroke lines={OLIVE} c="#a5d1ba" w={10.2} />
    <Stroke lines={TRUNK} c="#7ca5a0" w={17} />
    <Stroke lines={TRUNK} c="#a5beb8" w={14.4} />
    <g stroke="#68ad9b" strokeWidth="1.200" fill="none" opacity="0.6">
      {parse(TREES).map(([x, y]) => (
        <path key={`${x}-${y}`} d={`M${x - 5} ${y - 7}l-4 9h8zM${x - 5} ${y + 2}v6M${x + 5} ${y + 1}v7M${x + 5} ${y - 8}a4 4.500 0 1 0 .1 0`} />
      ))}
    </g>
    {parse(PEAKS).map(([x, y]) => <path key={`${x}-${y}`} d={`M${x - 8} ${y + 7}L${x} ${y - 7}L${x + 8} ${y + 7}z`} fill="#8fac91" />)}
    <rect x="682" y="774" width="12" height="12" fill="#5ba3c6" />
    {LABELS.map((l) => (
      <text key={`${l.x}-${l.y}`} x={l.x} y={l.y} fontSize={l.s ?? 20} fontWeight={l.w ?? 400} fontStyle={l.i ? "italic" : undefined} textLength={l.len} lengthAdjust="spacingAndGlyphs" fill={l.c} stroke="#cfe9e6" strokeOpacity="0.8" strokeWidth="3" paintOrder="stroke">
        {l.t}
      </text>
    ))}
    {STREETS.map((s, i) => (
      <g key={s.t}>
        <path id={`street-${i}`} d={s.d} fill="none" />
        <text fontSize={s.s ?? 17.5} fill={s.c ?? "#3a3c32"} stroke={s.halo ?? "#e3f0f2"} strokeWidth="3.500" paintOrder="stroke">
          <textPath href={`#street-${i}`}>{s.t}</textPath>
        </text>
      </g>
    ))}
    {SHIELDS.map((s) => (
      <g key={`${s.x}-${s.y}`}>
        <rect x={s.x - s.w / 2} y={s.y - 17} width={s.w} height="34" rx="3" fill={SHIELD_TONE[s.k][0]} stroke={SHIELD_TONE[s.k][1]} strokeWidth="2" />
        <text x={s.x} y={s.y + 7.5} fontSize="21" textAnchor="middle" fill={SHIELD_TONE[s.k][2]}>{s.t}</text>
      </g>
    ))}
    <defs>
      <linearGradient id="pin" x1="0" y1="0" x2="0" y2="1">
        <stop offset="0" stopColor="#4b9fd3" />
        <stop offset="1" stopColor="#3687ca" />
      </linearGradient>
    </defs>
    <path d="M679 899C674 877 655 862 655 844a24 24 0 0 1 48 0c0 18-19 33-24 55z" fill="url(#pin)" fillOpacity="0.94" stroke="#2f78b4" strokeWidth="1.500" />
    <circle cx="679" cy="845" r="8" fill="#e9f2f6" />
    <circle cx="238" cy="1196" r="4" fill="#fff" opacity="0.45" />
    <circle cx="238" cy="1256" r="4" fill="#fff" opacity="0.45" />
  </svg>
);

const MapFrame = styled.div`
  position: relative;
  height: 992px;
  margin-bottom: 2px;
  overflow: hidden;
  border: 2px solid #a9a9a9;
  border-bottom: 0;
  svg { display: block; }
`;

const MapControl = styled.div<{ $x: number; $y: number }>`
  position: absolute;
  left: ${(p) => p.$x}px;
  top: ${(p) => p.$y}px;
  display: flex;
  flex-direction: column;
  gap: 2px;
  padding: 6px;
  border-radius: 8px;
  background: rgba(255, 255, 255, 0.4);
`;

const MapButton = styled.div<{ $s?: number; $r?: string; $drop?: number }>`
  display: flex;
  align-items: center;
  justify-content: center;
  width: ${(p) => p.$s ?? 44}px;
  height: ${(p) => p.$s ?? 44}px;
  padding-top: ${(p) => p.$drop ?? 0}px;
  border-radius: ${(p) => p.$r ?? "4px"};
  background: rgba(50, 86, 156, 0.62);
  color: #fff;
  font: 700 29px/44px "Open Sans", "Noto Sans", sans-serif;
`;

const ScaleBar = styled.div`
  position: absolute;
  left: 16px;
  top: 931px;
  width: 342px;
  height: 43px;
  padding: 6px;
  border-radius: 8px;
  background: rgba(0, 60, 136, 0.3);
`;

const ScaleInner = styled.div`
  width: 330px;
  height: 31px;
  border: 2px solid #eee;
  border-top: 0;
  color: #eee;
  font-size: 20px;
  line-height: 28px;
  letter-spacing: 0;
  text-align: center;
`;

const AddressPanel = styled.div`
  ${panelEdge};
  display: flex;
  align-items: center;
  height: 64px;
  padding: 0 21px;
`;

const AddressLabel = styled.div<{ $w: number; $ml?: number }>`
  width: ${(p) => p.$w}px;
  margin-left: ${(p) => p.$ml ?? 0}px;
  padding-bottom: 8px;
`;

const Gap = styled.span<{ $w: number }>`
  flex: none;
  width: ${(p) => p.$w}px;
`;

/* ---------- info panel ---------- */

const InfoPanel = styled.section`
  ${panelEdge};
  display: flex;
  height: 220px;
  padding: 11px 22px 0;
  line-height: 36px;
`;

const InfoCol = styled.div<{ $w: number }>`
  width: ${(p) => p.$w}px;
  flex: none;
`;

const InfoRow = styled.div<{ $mt?: number; $bold?: boolean }>`
  display: flex;
  margin-top: ${(p) => p.$mt ?? 0}px;
  font-weight: ${(p) => (p.$bold ? 700 : 400)};
  ${(p) => p.$bold && "letter-spacing: -0.018em;"}
`;

const InfoKey = styled.span`
  flex: none;
  width: 140px;
  margin-right: 10px;
`;

const CheckRow = styled.div<{ $mt: number; $gap: number }>`
  display: flex;
  align-items: center;
  gap: ${(p) => p.$gap}px;
  height: 26px;
  margin: ${(p) => p.$mt}px 0 0 6px;
  line-height: 26px;
`;

const CheckText = styled.div`
  padding-bottom: 4px;
`;

const Buttons = styled.div<{ $gap: number; $mt?: number; $ml?: number }>`
  display: flex;
  gap: ${(p) => p.$gap}px;
  margin-top: ${(p) => p.$mt ?? 0}px;
  margin-left: ${(p) => p.$ml ?? 0}px;
`;

const FileRow = styled.div`
  display: flex;
  align-items: center;
  gap: 8px;
  margin-top: 6px;
  white-space: nowrap;
`;

const FileButton = styled.span`
  width: 158px;
  height: 41px;
  border: 2px solid #d0d0d0;
  border-radius: 6px;
  background: #efefef;
  color: #aaa;
  line-height: 37px;
  letter-spacing: -0.01em;
  text-align: center;
`;

/* ---------- form panel ---------- */

const FormPanel = styled.section`
  ${panelEdge};
  display: flex;
  height: 730px;
`;

const Tabs = styled.div`
  display: flex;
  flex-direction: column;
  width: 247px;
  height: 515px;
  gap: 6.6px;
  background: linear-gradient(#ddd, #ddd) right 70px / 2px 100% no-repeat;
`;

const Tab = styled.div<{ $c: string; $first?: boolean }>`
  flex: none;
  height: 67px;
  padding-left: 46px;
  border-left: 10px solid ${(p) => p.$c};
  border-radius: 6px 0 0 6px;
  color: ${(p) => (p.$first ? "#555" : "#337ab7")};
  font-size: 18px;
  line-height: ${(p) => (p.$first ? 66 : 67)}px;
  letter-spacing: -0.02em;
  ${(p) => p.$first && "border-top: 2px solid #ddd; border-bottom: 2px solid #ddd; height: 70px; margin-bottom: -1.5px; background: #fff;"}
`;

const FormArea = styled.div`
  width: 827px;
  margin-left: 42px;
`;

const FormHeader = styled.div`
  display: flex;
  align-items: center;
  height: 81px;
  padding: 0 21px 0 34px;
  background: #fd8d3c;
  color: #fff;
  font-weight: 700;
  font-size: 32px;
  letter-spacing: 0.1px;
  white-space: nowrap;
`;

const FormTitle = styled.span`
  flex: 1;
  margin-left: 22px;
  padding-top: 15px;
`;

const HelpSlot = styled.span`
  display: flex;
  padding-top: 15px;
`;

const FormRows = styled.div`
  display: flex;
  flex-direction: column;
  gap: 6px;
  padding: 20px 36px 0 12px;
`;

const FormRow = styled.div`
  display: flex;
  align-items: center;
  height: 44px;
`;

const HeadRow = styled.div`
  display: flex;
  gap: 14px;
  align-items: flex-start;
  height: 34px;
  line-height: 30px;
`;

const FormLabel = styled.div<{ $w?: number; $drop?: number }>`
  display: flex;
  width: ${(p) => p.$w ?? 393}px;
  flex: none;
  padding-bottom: ${(p) => 8 - (p.$drop ?? 0)}px;
  margin-right: auto;
`;

const Star = styled.sup`
  margin-top: -4px;
  color: #c9302c;
  font-size: 20px;
  line-height: 20px;
`;

const Strong = styled.b`
  letter-spacing: -0.018em;
`;

const SideCheck = styled.div`
  display: flex;
  width: 387px;
  gap: 15px;
  padding-top: 8px;
  align-items: flex-start;
  margin-left: auto;
`;

const SideLabel = styled.div`
  padding-top: 6px;
  line-height: 26px;
`;

const HeadCheckText = styled.div`
  padding-top: 4px;
`;

const ActionPanel = styled.section`
  ${panelEdge};
  display: flex;
  align-items: flex-start;
  height: 124px;
  padding: 20px 95px 0 122px;
`;

/* ---------- results ---------- */

const Results = styled.section`
  ${panelEdge};
  height: 1032px;
  margin-top: 30px;
`;

const ResultsHeader = styled.div`
  display: flex;
  align-items: center;
  justify-content: space-between;
  height: 92px;
  padding: 0 20px 4px 305px;
  border: 2px solid #ddd;
  background: #fd8d3c;
  color: #fff;
`;

const ResultsTitle = styled.h2`
  margin: 0;
  padding-bottom: 8px;
  font-size: 32px;
  letter-spacing: 0.04px;
`;

const ToggleHalf = styled(Button)<{ $active?: boolean; $side: "l" | "r" }>`
  border-radius: ${(p) => (p.$side === "l" ? "6px 0 0 6px" : "0 6px 6px 0")};
  justify-content: flex-start;
  padding-left: ${(p) => (p.$side === "l" ? 13 : 16)}px;
  ${(p) => p.$active && "background: #286090; border-color: #204d74; box-shadow: inset 0 6px 10px rgba(0, 0, 0, 0.125);"}
`;

const ResultsBody = styled.div`
  display: flex;
`;

const Summary = styled.div`
  width: 550px;
  padding-left: 33px;
`;

const BlockTitle = styled.h3<{ $w: number; $ml?: number }>`
  width: ${(p) => p.$w}px;
  margin: 24px 0 0 ${(p) => p.$ml ?? 0}px;
  font-size: 26px;
  line-height: 30px;
  letter-spacing: -0.018em;
  text-align: center;
  white-space: nowrap;
`;

const SaveSlot = styled.div<{ $w: number; $h: number; $mt: number }>`
  display: flex;
  justify-content: flex-end;
  width: ${(p) => p.$w}px;
  height: ${(p) => p.$h}px;
  margin-top: ${(p) => p.$mt}px;
`;

const TableHead = styled.div<{ $mt?: number }>`
  width: 517px;
  height: 40px;
  margin-top: ${(p) => p.$mt ?? 0}px;
  padding-left: 8px;
  background: #0065a2;
  color: #fff;
  font-size: 24px;
  line-height: 40px;
  letter-spacing: -0.1px;
`;

const TableRow = styled.div<{ $indent?: boolean }>`
  display: flex;
  justify-content: space-between;
  width: 517px;
  padding: 7.5px 8px 8.5px ${(p) => (p.$indent ? 40 : 8)}px;
  font-size: 24px;
  line-height: 23.8px;
  letter-spacing: -0.1px;
  sup { font-size: 18px; line-height: 0; vertical-align: 7px; }
`;

const TableKey = styled.span`
  max-width: 380px;
  white-space: nowrap;
`;

const INPUTS: [string, React.ReactNode][] = [
  ["Location [Lat/Lon]:", "50.872,8.016"],
  ["Horizon:", "Calculated"],
  ["Database used:", <Caps key="db">PVGIS-SARAH2</Caps>],
  ["PV technology:", "Crystalline silicon"],
  ["PV installed [kWp]:", "1"],
  ["System loss [%]:", "14"],
];

const OUTPUTS: { k: React.ReactNode; v: string; indent?: boolean }[] = [
  { k: "Slope angle [°]:", v: "35" },
  { k: "Azimuth angle [°]:", v: "0" },
  { k: "Yearly PV energy production [kWh]:", v: "984.97" },
  { k: <>Yearly in-plane irradiation [kWh/m<sup>2</sup>]:</>, v: "1228.68" },
  { k: "Year-to-year variability [kWh]:", v: "55.29" },
  { k: "Changes in output due to:", v: "" },
  { k: "Angle of incidence [%]:", v: "-3.1", indent: true },
  { k: "Spectral effects [%]:", v: "1.83", indent: true },
  { k: <>Temperature and low irradiance<br />[%]:</>, v: "-5.53", indent: true },
  { k: "Total loss [%]:", v: "-19.84" },
];

const ENERGY: [string, number][] = [
  ["Jan", 31.5], ["Feb", 49.2], ["Mar", 86.7], ["Apr", 116], ["May", 119.3], ["Jun", 120.7],
  ["Jul", 123.4], ["Aug", 113.6], ["Sep", 95], ["Oct", 65.6], ["Nov", 35.2], ["Dec", 25.5],
];

const ChartBlock = styled.div`
  width: 1110px;
  svg { display: block; }
`;

const HorizonBlock = styled.div`
  width: 600px;
  svg { display: block; }
`;

const EnergyChart = () => {
  const step = 75.55;
  const y0 = 655;
  return (
    <svg width="1110" height="780" viewBox="0 0 1110 780" fontFamily={SANS} fontSize="22" letterSpacing="0" fill="#606060">
      {[150, 125, 100, 75, 50, 25, 0].map((v) => {
        const y = y0 - (v / 150) * 644;
        return (
          <g key={v}>
            {v > 0 && <path d={`M194 ${Math.ceil(y)}H1100`} stroke="#d8d8d8" strokeWidth="2" />}
            <text x="164" y={y + 11.5} textAnchor="end">{v}</text>
          </g>
        );
      })}
      {ENERGY.map(([m, v], i) => (
        <g key={m}>
          <rect x={Math.round(213.6 + i * step)} y={y0 - (v / 150) * 644} width="38" height={(v / 150) * 644} fill="#22a7ff" />
          <text x={231.5 + i * step} y={y0 + 37} textAnchor="middle">{m}</text>
        </g>
      ))}
      <path d={`M193 ${y0}H1101` + Array.from({ length: 13 }, (_, i) => `M${Math.round(193.5 + i * step)} ${y0}v18`).join("")} stroke="#c0d0e0" strokeWidth="2" fill="none" />
      <text x="647" y={y0 + 74} fontSize="24" fill="#707070" textAnchor="middle">Month</text>
      <text transform="translate(107 333) rotate(-90)" fontSize="24" fill="#707070" textAnchor="middle" textLength="252">PV energy output [kWh]</text>
    </svg>
  );
};

const ring = (s: string) => s.split(" ").map((p) => {
  const [x, y] = p.split(",").map(Number);
  return `${(x * 0.37 + 50).toFixed(1)},${(y * 0.6059 - 112).toFixed(1)}`;
}).join(" ");

const SKY = "757,484 825,484 890,489 950,502 1010,518 1065,540 1105,572 1150,597 1195,650 1233,700 1242,742 1241,782 1236,822 1218,860 1150,930 1065,1003 1010,1035 945,1055 870,1069 815,1075 757,1078 695,1078 630,1071 570,1057 455,1021 395,987 335,932 280,860 272,820 274,782 297,702 317,667 380,607 425,578 470,552 570,506 630,495";
const JUNE = "390,571 360,595 349,640 352,685 380,742 455,805 520,838 630,867 757,878 875,868 992,838 1060,805 1130,745 1162,690 1166,640 1155,597 1125,571";
const DECEMBER = "355,969 400,990 500,1015 640,1034 757,1039 870,1034 1060,1004 1120,985 1160,968";

const COMPASS: [string, number, number][] = [
  ["N", 330, 155], ["NE", 499, 218], ["E", 554, 372], ["SE", 498, 525], ["S", 330, 589], ["SW", 159, 525], ["W", 102, 372], ["NW", 159, 218], ["45", 312, 265], ["90", 312, 358],
];

const HorizonChart = () => (
  <svg width="600" height="780" viewBox="0 0 600 780" fontFamily={SANS} fontSize="22" letterSpacing="0" fill="#606060">
    <circle cx="330" cy="362" r="187" fill="#8a8a8a" stroke="#bccbdb" strokeWidth="1.500" />
    <polygon points={ring(SKY)} fill="#c8d2db" />
    <g stroke="#7f8c98" strokeOpacity="0.06" strokeWidth="1.500" fill="none">
      <circle cx="330" cy="362" r="93.500" />
      <path d="M330 175V549M143 362H517M198 230 462 494M462 230 198 494" />
    </g>
    <polyline points={ring(JUNE)} fill="none" stroke="#000" strokeWidth="2" strokeDasharray="16 6" />
    <polyline points={ring(DECEMBER)} fill="none" stroke="#000" strokeWidth="2" strokeDasharray="2 2" />
    {COMPASS.map(([t, x, y]) => <text key={t} x={x} y={y} textAnchor="middle">{t}</text>)}
    <rect x="106" y="640" width="32" height="24" fill="#666" />
    <path d="M106 682H138" stroke="#000" strokeWidth="2" strokeDasharray="16 6" />
    <path d="M106 710H136" stroke="#000" strokeWidth="2" strokeDasharray="2 2" />
    <g fontSize="24" fill="#333">
      <text x="148" y="662">Horizon height</text>
      <text x="148" y="690">Sun height, June</text>
      <text x="148" y="718">Sun height, December</text>
    </g>
  </svg>
);

const Footer = styled.footer`
  display: flex;
  justify-content: center;
  gap: 20px;
  padding: 113px 14px 0 0;
  font-size: 28px;
  line-height: 36px;
  letter-spacing: 0.2px;
  white-space: nowrap;
`;

const Link = styled.a`
  color: #337ab7;
`;

/* ---------- commission logo ---------- */

const star = (cx: number, cy: number, r: number) =>
  Array.from({ length: 10 }, (_, i) => {
    const a = (i * Math.PI) / 5 - Math.PI / 2;
    const k = i % 2 ? r * 0.4 : r;
    return `${(cx + Math.cos(a) * k).toFixed(1)},${(cy + Math.sin(a) * k).toFixed(1)}`;
  }).join(" ");

const leftWing = (i: number) => {
  const yl = 90 + i * 9;
  const yr = 33 + i * 14;
  const f = 1 - i / 12;
  const m = yl - 13 * f;
  return `M210 ${yl - 3.5 * (1 - i * 0.02)}C250 ${yl - 7 * f - 3} 290 ${m - 1.5} 320 ${m - 2}C345 ${m - 6} 362 ${yr + 32} 380 ${yr - 1}V${yr + 2}C363 ${yr + 37} 350 ${m - 1} 322 ${m + 4}C290 ${m + 5} 250 ${yl + 2 - 5 * f} 210 ${yl + 3.5}z`;
};

const rightWing = (i: number) => {
  const a = 33 + i * 13.4;
  const b = 115 + i * 7.1;
  const f = 1 - i / 12;
  const ex = 490;
  const ey = b - 20 * f - 3;
  return `M449.500 ${a}C462 ${a + 26 * f + 2} 474 ${ey - 14 * f} ${ex} ${ey}C500 ${ey + 12 * f + 1} 530 ${b - 6 * f} 553 ${b}V${b + 3}C528 ${b - 2 * f + 2} 500 ${ey + 16 * f + 3} ${ex - 3} ${ey + 4}C474 ${ey - 4 * f + 3} 462 ${a + 33 * f + 5} 449.500 ${a + 3 + 6 * Math.min(1, f + 0.3)}z`;
};

const CommissionLogo = () => (
  <Logo width="346" height="242" viewBox="210 30 346 242">
    <g fill="#c8cacc">
      {Array.from({ length: 13 }, (_, i) => <path key={i} d={leftWing(i)} />)}
      {Array.from({ length: 13 }, (_, i) => <path key={i} d={rightWing(i)} />)}
    </g>
    <rect x="381" y="98" width="68" height="104" fill="#fff" />
    <rect x="280" y="101" width="148" height="100" fill="#004494" />
    <g fill="#ffed00">
      {Array.from({ length: 12 }, (_, i) => {
        const a = (i * Math.PI) / 6;
        return <polygon key={i} points={star(354.5 + Math.sin(a) * 33, 150.5 - Math.cos(a) * 33, 7.5)} />;
      })}
    </g>
    <rect x="280" y="201" width="148" height="61" fill="#fff" />
    <rect x="280" y="262" width="148" height="8" fill="#004494" />
    <g fontFamily={`"Open Sans", sans-serif`} fontSize="21" letterSpacing="0" fill="#75797c" stroke="#75797c" strokeWidth="0.400">
      <text x="288" y="228" textLength="99">European</text>
      <text x="288" y="250" textLength="128">Commission</text>
    </g>
  </Logo>
);

/* ---------- app ---------- */

const Label = ({ t, star: s = true, space }: { t: string; star?: boolean; space?: boolean }) => (
  <FormLabel>
    <Thin $faded={!s}>{t}</Thin>
    {space && <Gap $w={6} />}
    {s && <Star>*</Star>}
  </FormLabel>
);

export default function App() {
  return (
    <>
      <GlobalStyle />
      <Page>
        <Header>
          <TopLinks>
            Legal notice |Cookies |Contact |
            <LangSelect>English (en)<Chevron /></LangSelect>
          </TopLinks>
          <CommissionLogo />
          <SiteTitle>PHOTOVOLTAIC GEOGRAPHICAL INFORMATION SYSTEM</SiteTitle>
        </Header>
        <BlueBand />
        <Crumbs>
          <span>European Commission</span><CrumbSep>&gt;</CrumbSep>
          <span>EU Science Hub</span><CrumbSep>&gt;</CrumbSep>
          <span>PVGIS</span><CrumbSep>&gt;</CrumbSep>
          <span>Interactive tools</span>
        </Crumbs>
        <Nav>
          <NavItem>Home</NavItem>
          <NavItem>Tools</NavItem>
          <NavItem>Downloads<Caret /></NavItem>
          <NavItem>Documentation</NavItem>
          <NavItem>Contact us</NavItem>
        </Nav>
        <NavLine />
        <Content>
          <Columns>
            <Column>
              <MapFrame>
                <MapDrawing />
                <MapControl $x={14} $y={14}>
                  <MapButton $r="4px 4px 0 0" $drop={5}>+</MapButton>
                  <MapButton $r="0 0 4px 4px" $drop={4}>−</MapButton>
                </MapControl>
                <MapControl $x={1014} $y={14}>
                  <MapButton $s={76}>
                    <svg width="52" height="54" viewBox="0 0 52 54">
                      <path d="M26 8Q30 8 34 12L49 26Q52 31 48 35L31 49Q26 53 21 49L4 35Q0 31 3 26L18 12Q22 8 26 8z" fill="#3c6a92" />
                      <path d="M26 5Q30 5 34 9L49 23Q52 28 48 32L31 46Q26 50 21 46L4 32Q0 28 3 23L18 9Q22 5 26 5z" fill="#fff" />
                      <path d="M26 1Q30 1 34 5L49 19Q52 24 48 28L31 42Q26 46 21 42L4 28Q0 24 3 19L18 5Q22 1 26 1z" fill="#4fc0d0" />
                      <path d="M26 1Q30 1 34 5L46 16Q20 12 7 30L4 28Q0 24 3 19L18 5Q22 1 26 1z" fill="#6ccbd7" />
                    </svg>
                  </MapButton>
                </MapControl>
                <MapControl $x={14} $y={774}><MapButton>O</MapButton></MapControl>
                <MapControl $x={14} $y={848}><MapButton>L</MapButton></MapControl>
                <MapControl $x={1046} $y={920}><MapButton>i</MapButton></MapControl>
                <ScaleBar><ScaleInner>1000 m</ScaleInner></ScaleBar>
              </MapFrame>
              <AddressPanel>
                <AddressLabel $w={114}><Thin>Address:</Thin></AddressLabel>
                <Field $w={258} $align="right" $pad={4}>Eg.Ispra, Italy</Field>
                <Gap $w={6} />
                <Button $w={69} $size={25}>Go!</Button>
                <AddressLabel $w={152} $ml={103}><Thin>Lat/Lon:</Thin></AddressLabel>
                <Field $w={107} $pad={4}><Placeholder>Eg. 45.815</Placeholder></Field>
                <Gap $w={6} />
                <Field $w={107} $pad={4}><Placeholder>Eg. 8.611</Placeholder></Field>
                <Gap $w={6} />
                <Button $w={69} $size={25}>Go!</Button>
              </AddressPanel>
            </Column>

            <Column $gap={20}>
              <InfoPanel>
                <InfoCol $w={367}>
                  <InfoRow $bold>Cursor:</InfoRow>
                  <InfoRow $bold $mt={14}><InfoKey>Selected:</InfoKey>50.872, 8.016</InfoRow>
                  <InfoRow $mt={3}><InfoKey>Elevation (m):</InfoKey>242</InfoRow>
                  <InfoRow $mt={4}><InfoKey>PVGIS ver.</InfoKey><b>5.2</b></InfoRow>
                </InfoCol>
                <InfoCol $w={306}>
                  <InfoRow $bold>Use terrain shadows:</InfoRow>
                  <CheckRow $mt={10} $gap={6}>
                    <Check $on>
                      <svg width="18" height="20" viewBox="0 0 18 20"><path d="M2 11 6.500 17 16 2" fill="none" stroke="#222b1e" strokeWidth="4" /></svg>
                    </Check>
                    <CheckText><Thin $faded>Calculated horizon</Thin></CheckText>
                  </CheckRow>
                  <CheckRow $mt={24} $gap={0}><Check /><CheckText><Thin $faded>Upload horizon file</Thin></CheckText></CheckRow>
                  <Buttons $gap={0} $mt={17} $ml={6}><Button $w={248} $size={24.5} $tone="green">Switch to version 5.1</Button></Buttons>
                </InfoCol>
                <InfoCol $w={400}>
                  <Buttons $gap={32} $mt={39}>
                    <Button $w={108} $size={25}><SaveIcon />csv</Button>
                    <Button $w={107} $size={25} $gap={7}><SaveIcon />json</Button>
                  </Buttons>
                  <FileRow><FileButton>Choose file</FileButton>No file chosen</FileRow>
                </InfoCol>
              </InfoPanel>

              <FormPanel>
                <Tabs>
                  <Tab $first $c="#ddd">GRID CONNECTED</Tab>
                  <Tab $c="#fd8d3c">TRACKING PV</Tab>
                  <Tab $c="#fd8d3c">OFF-GRID</Tab>
                  <Tab $c="#756bb1">MONTHLY DATA</Tab>
                  <Tab $c="#756bb1">DAILY DATA</Tab>
                  <Tab $c="#756bb1">HOURLY DATA</Tab>
                  <Tab $c="#31a354">TMY</Tab>
                </Tabs>
                <FormArea>
                  <FormHeader>
                    <SolarIcon />
                    <FormTitle>PERFORMANCE OF GRID-CONNECTED PV</FormTitle>
                    <HelpSlot><HelpIcon s={30} bg="#fd8d3c" /></HelpSlot>
                  </FormHeader>
                  <FormRows>
                    <FormRow><Label t="Solar radiation database" /><SelectBox $w={387}><Caps>PVGIS-SARAH2</Caps><Chevron /></SelectBox></FormRow>
                    <FormRow><Label t="PV technology" /><SelectBox $w={387}>Crystalline silicon<Chevron /></SelectBox></FormRow>
                    <FormRow><Label t="Installed peak PV power [kWp]" /><Field $w={190} $kind="valid" $align="right" $pad={20}>1</Field></FormRow>
                    <FormRow><Label t="System loss [%]" /><Field $w={190} $kind="valid" $align="right" $pad={20}>14<Tick /></Field></FormRow>
                    <FormRow><FormLabel $drop={4}><Strong>Fixed mounting options</Strong></FormLabel></FormRow>
                    <FormRow><Label t="Mounting position" space /><SelectBox $w={387}>Free-standing<Chevron /></SelectBox></FormRow>
                    <FormRow>
                      <FormLabel $w={196}><Thin>Slope [º]</Thin><Star>*</Star></FormLabel>
                      <Field $w={125} $kind="valid" $align="right" $pad={20}>35<Tick /></Field>
                      <Gap $w={71} />
                      <SideCheck><Check /><SideLabel><Thin>Optimize slope</Thin></SideLabel></SideCheck>
                    </FormRow>
                    <FormRow>
                      <FormLabel $w={196}><Thin>Azimuth [º]</Thin><Star>*</Star></FormLabel>
                      <Field $w={125} $kind="valid" $align="right" $pad={20}>0<Tick /></Field>
                      <Gap $w={71} />
                      <SideCheck><Check /><SideLabel><Thin>Optimize slope and azimuth</Thin></SideLabel></SideCheck>
                    </FormRow>
                    <HeadRow><Check /><HeadCheckText><Strong>PV electricity price</Strong></HeadCheckText></HeadRow>
                    <FormRow><Label star={false} t="PV system cost (your currency)" /><Field $w={190} $kind="off" /></FormRow>
                    <FormRow><Label star={false} t="Interest [%/year]" /><Field $w={190} $kind="off" /></FormRow>
                    <FormRow><Label star={false} t="Lifetime [years]" /><Field $w={190} $kind="off" /></FormRow>
                  </FormRows>
                </FormArea>
              </FormPanel>

              <ActionPanel>
                <Button $w={336} $h={60} $size={24} $gap={12}><EyeIcon />Visualize results</Button>
                <Buttons $gap={4} $mt={6} $ml={177}>
                  <Button $w={195} $h={60} $size={24} $gap={28}><SaveIcon w={22} />csv</Button>
                  <Button $w={191} $h={60} $size={24} $gap={28}><SaveIcon w={22} />json</Button>
                </Buttons>
              </ActionPanel>
            </Column>
          </Columns>

          <Results>
            <ResultsHeader>
              <ResultsTitle>PERFORMANCE OF GRID-CONNECTED PV: RESULTS</ResultsTitle>
              <Buttons $gap={10}>
                <Buttons $gap={0}>
                  <ToggleHalf $w={182} $size={24} $gap={19} $side="l" $active><EyeIcon />PV output</ToggleHalf>
                  <ToggleHalf $w={182} $size={24} $gap={18} $side="r"><EyeIcon />Radiation</ToggleHalf>
                </Buttons>
                <Button $w={174} $size={24} $gap={7}><HelpIcon s={23} bg="#337ab7" />Info</Button>
                <Button $w={175} $size={24} $gap={7}><PrintIcon />PDF</Button>
              </Buttons>
            </ResultsHeader>
            <ResultsBody>
              <Summary>
                <BlockTitle $w={460}>Summary</BlockTitle>
                <SaveSlot $w={517} $h={38} $mt={24}><SaveIcon s={34} w={34} fill="#000" /></SaveSlot>
                <TableHead>Provided inputs:</TableHead>
                {INPUTS.map(([k, v]) => <TableRow key={k}><TableKey>{k}</TableKey><span>{v}</span></TableRow>)}
                <TableHead $mt={40}>Simulation outputs:</TableHead>
                {OUTPUTS.map((o, i) => <TableRow key={i} $indent={o.indent}><TableKey>{o.k}</TableKey><span>{o.v}</span></TableRow>)}
              </Summary>
              <ChartBlock>
                <BlockTitle $w={1180}>Monthly energy output from fix-angle PV system</BlockTitle>
                <SaveSlot $w={1102} $h={34} $mt={26}><SaveIcon s={34} w={36} fill="#000" /></SaveSlot>
                <EnergyChart />
              </ChartBlock>
              <HorizonBlock>
                <BlockTitle $w={640}>Outline of horizon</BlockTitle>
                <SaveSlot $w={552} $h={34} $mt={26}><SaveIcon s={34} w={36} fill="#000" /></SaveSlot>
                <HorizonChart />
              </HorizonBlock>
            </ResultsBody>
          </Results>
          <Footer><span>Last update: 01/03/2022</span><Link>Top</Link></Footer>
        </Content>
      </Page>
    </>
  );
}
